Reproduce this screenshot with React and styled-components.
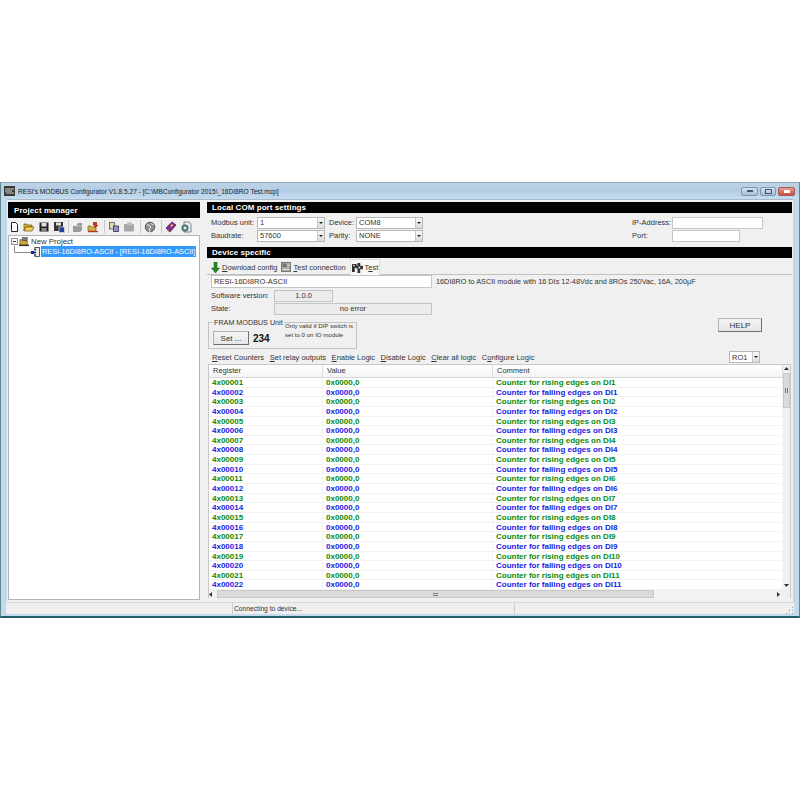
import React from "react";
import styled, { createGlobalStyle } from "styled-components";

const GlobalStyle = createGlobalStyle`
  html, body {
    margin: 0;
    padding: 0;
    background: #ffffff;
  }
  #root {
    width: 800px;
    height: 800px;
    font-family: "Liberation Sans", sans-serif;
    font-size: 7.5px;
    color: #333333;
  }
  * {
    box-sizing: border-box;
  }
  u {
    text-underline-offset: 1px;
  }
`;

const Window = styled.div`
  position: relative;
  top: 182px;
  width: 800px;
  height: 436px;
  display: flex;
  flex-direction: column;
  background: #c4d9ec;
  border: 1px solid #5f8790;
  border-bottom: 2px solid #1f5f70;
  border-top-color: #8fa9b5;
`;

const TitleBar = styled.div`
  height: 16px;
  flex: none;
  display: flex;
  align-items: center;
  padding: 0 4px 0 3px;
  gap: 3px;
  background: linear-gradient(#bdd2e6 0%, #b4cde4 45%, #c5dcf0 100%);
  font-size: 6.6px;
  color: #222222;
`;

const TitleText = styled.span`
  flex: 1;
  white-space: nowrap;
`;

const WinButtons = styled.div`
  display: flex;
  gap: 2px;
`;

const WinButton = styled.div`
  width: ${(p) => p.$w}px;
  height: 9px;
  border: 1px solid ${(p) => (p.$close ? "#a85a50" : "#7f97ad")};
  border-radius: 2px;
  background: ${(p) =>
    p.$close
      ? "linear-gradient(#e0a090, #c8503c)"
      : "linear-gradient(#d5e3f0, #a4bdd6)"};
  display: flex;
  align-items: center;
  justify-content: center;
`;

const WinGlyph = styled.div`
  width: ${(p) => p.$w}px;
  height: ${(p) => p.$h}px;
  border: 1px solid ${(p) => p.$c || "#44586c"};
  background: ${(p) => (p.$fill ? p.$fill : "transparent")};
`;

const Client = styled.div`
  flex: 1;
  min-height: 0;
  margin: 0 6px;
  display: flex;
  background: #f0f0f0;
  border-top: 1px solid #a9b9c8;
`;

const LeftPane = styled.div`
  width: 192px;
  flex: none;
  margin: 2px 0 2px 1px;
  display: flex;
  flex-direction: column;
`;

const Divider = styled.div`
  width: 7px;
  flex: none;
`;

const RightPane = styled.div`
  flex: 1;
  min-width: 0;
  display: flex;
  flex-direction: column;
  padding-top: 2px;
  margin-right: 1px;
`;

const PaneHeader = styled.div`
  height: ${(p) => p.$h}px;
  flex: none;
  background: #000000;
  color: #ffffff;
  font-weight: 700;
  font-size: 8px;
  letter-spacing: 0.07px;
  display: flex;
  align-items: center;
  padding-left: ${(p) => p.$pad}px;
`;

const Toolbar = styled.div`
  height: 17px;
  flex: none;
  display: flex;
  align-items: center;
  gap: 3px;
`;

const ToolSep = styled.div`
  width: 1px;
  height: 13px;
  background: #c8c8c8;
  margin-left: ${(p) => p.$ml || 0}px;
`;

const TreeBox = styled.div`
  flex: 1;
  background: #ffffff;
  border: 1px solid #b4b4b4;
  padding-left: 2px;
`;

const TreeRow = styled.div`
  display: flex;
  align-items: center;
  height: 10px;
  font-size: 7.8px;
  white-space: nowrap;
`;

const TreeChildRow = styled(TreeRow)`
  height: 11px;
  margin-left: 3px;
`;

const TreeLabel = styled.span`
  margin-left: 1px;
`;

const Expander = styled.div`
  width: 7px;
  height: 7px;
  border: 1px solid #8a8a8a;
  display: flex;
  align-items: center;
  justify-content: center;
  margin-right: 1px;
`;

const ExpanderDash = styled.div`
  width: 3px;
  height: 1px;
  background: #333333;
`;

const Selected = styled.span`
  background: #3399ff;
  color: #ffffff;
  height: 11px;
  line-height: 11px;
  padding: 0 1px;
  margin-left: 1px;
  font-size: 7.3px;
`;

const SettingsGrid = styled.div`
  display: grid;
  grid-template-columns: 46px 68px 31px 67px 209px 40px 91px;
  grid-template-rows: 13px 13px;
  padding: 3px 0 0 4px;
  height: 34px;
  flex: none;
  align-items: center;
`;

const FieldLabel = styled.span`
  white-space: nowrap;
  padding-left: ${(p) => p.$pad || 0}px;
`;

const Spacer = styled.span``;

const Combo = styled.div`
  height: 12px;
  width: ${(p) => (p.$w ? `${p.$w}px` : "100%")};
  background: #ffffff;
  border: 1px solid #b8b8b8;
  display: flex;
  align-items: center;
  justify-content: space-between;
  padding-left: 2px;
`;

const ComboArrow = styled.div`
  width: 7px;
  height: 100%;
  background: linear-gradient(#f6f6f6, #dcdcdc);
  border-left: 1px solid #c8c8c8;
  display: flex;
  align-items: center;
  justify-content: center;

  &::after {
    content: "";
    border-left: 2px solid transparent;
    border-right: 2px solid transparent;
    border-top: 2px solid #222222;
  }
`;

const TextInput = styled.div`
  height: ${(p) => p.$h || 12}px;
  width: ${(p) => p.$w}px;
  flex: none;
  background: #ffffff;
  border: 1px solid #c6c6c6;
  padding-left: 2px;
  line-height: ${(p) => (p.$h || 12) - 2}px;
`;

const Tabs = styled.div`
  height: 17px;
  flex: none;
  display: flex;
  align-items: flex-end;
  padding-left: 3px;
  border-bottom: 1px solid #c0c0c0;
`;

const Tab = styled.div`
  height: ${(p) => (p.$active ? 16 : 14)}px;
  margin-right: ${(p) => p.$gap}px;
  margin-bottom: ${(p) => (p.$active ? -1 : 0)}px;
  display: flex;
  align-items: center;
  gap: 2px;
  white-space: nowrap;
  padding: 0 1px;
  background: ${(p) => (p.$active ? "#f8f8f8" : "transparent")};
  border: ${(p) => (p.$active ? "1px solid #dddddd" : "none")};
  border-bottom: none;
`;

const NameRow = styled.div`
  display: flex;
  align-items: center;
  gap: 4px;
  height: 13px;
  flex: none;
  padding-left: 4px;
  white-space: nowrap;
`;

const Description = styled.span`
  font-size: 7.3px;
`;

const InfoRow = styled.div`
  display: flex;
  align-items: center;
  height: 13px;
  flex: none;
  margin-top: ${(p) => p.$top || 0}px;
  padding-left: 4px;
`;

const InfoLabel = styled.span`
  width: 63px;
  flex: none;
  white-space: nowrap;
`;

const ReadBox = styled.div`
  width: ${(p) => p.$w}px;
  height: 12px;
  background: #ececec;
  border: 1px solid #c4c4c4;
  text-align: center;
  line-height: 10px;
`;

const UnitRow = styled.div`
  display: flex;
  align-items: flex-start;
  justify-content: space-between;
  height: 35px;
  flex: none;
  padding: 3px 30px 0 1px;
`;

const FramGroup = styled.div`
  position: relative;
  width: 149px;
  height: 27px;
  margin-top: 4px;
  border: 1px solid #c2c2c2;
  display: flex;
  align-items: flex-end;
  padding: 0 0 3px 4px;
`;

const GroupLegend = styled.span`
  position: absolute;
  left: 4px;
  top: -5px;
  padding: 0 1px;
  background: #f0f0f0;
  font-size: 7.2px;
  white-space: nowrap;
`;

const PushButton = styled.div`
  width: ${(p) => p.$w}px;
  height: ${(p) => p.$h}px;
  flex: none;
  background: linear-gradient(#f4f4f4, #e6e6e6);
  border: 1px solid #b4b4b4;
  border-right-color: #707070;
  border-bottom-color: #707070;
  display: flex;
  align-items: center;
  justify-content: center;
  font-size: 8px;
`;

const UnitValue = styled.span`
  font-size: 10px;
  font-weight: 700;
  color: #111111;
  margin: 0 0 1px 4px;
  width: 32px;
`;

const Hint = styled.div`
  position: absolute;
  left: 76px;
  top: -2px;
  font-size: 6.1px;
  line-height: 9px;
  white-space: nowrap;
`;

const ActionRow = styled.div`
  height: 14px;
  flex: none;
  display: flex;
  align-items: center;
  padding: 0 32px 0 5px;
  white-space: nowrap;
`;

const ActionLink = styled.span`
  margin-right: 5.6px;
`;

const ActionFill = styled.div`
  flex: 1;
`;

const TableBox = styled.div`
  width: 583px;
  height: 234px;
  margin-left: 1px;
  flex: none;
  display: grid;
  grid-template-columns: 1fr 7px;
  grid-template-rows: 1fr 8px;
  background: #f0f0f0;
  border: 1px solid #c8c8c8;
  border-bottom: none;
`;

const TableArea = styled.div`
  overflow: hidden;
  background: #ffffff;
`;

const TableHead = styled.div`
  display: grid;
  grid-template-columns: 114px 170px 1fr;
  height: 13px;
  background: linear-gradient(#ffffff, #f4f4f4);
  border-bottom: 1px solid #d8d8d8;
`;

const HeadCell = styled.div`
  padding-left: 4px;
  line-height: 12px;
  border-right: 1px solid #dcdcdc;
`;

const TableRow = styled.div`
  display: grid;
  grid-template-columns: 114px 170px 1fr;
  height: 9.65px;
  border-bottom: 1px solid #f2f2f2;
  color: ${(p) => (p.$odd ? "#0b8a0b" : "#1a1ae6")};
  font-weight: 700;
  font-size: 8px;
  line-height: 9px;
  white-space: nowrap;
`;

const Cell = styled.div`
  padding-left: 3px;
  border-right: 1px solid #f2f2f2;
`;

const VScroll = styled.div`
  display: flex;
  flex-direction: column;
  align-items: stretch;
  background: #f2f2f2;
`;

const VThumb = styled.div`
  height: 35px;
  background: #dadada;
  border: 1px solid #c8c8c8;
  display: flex;
  align-items: center;
  justify-content: center;
`;

const VFill = styled.div`
  flex: 1;
`;

const HScroll = styled.div`
  display: flex;
  align-items: stretch;
  background: #f2f2f2;
`;

const HThumb = styled.div`
  width: 437px;
  background: #dadada;
  border: 1px solid #c8c8c8;
  display: flex;
  align-items: center;
  justify-content: center;
  margin-left: 3px;
`;

const Grip = styled.div`
  width: ${(p) => p.$w}px;
  height: ${(p) => p.$h}px;
  background: repeating-linear-gradient(
    ${(p) => (p.$w > p.$h ? "0deg" : "90deg")},
    #777777 0 1px,
    #dddddd 1px 2px
  );
`;

const ArrowBox = styled.div`
  flex: none;
  width: ${(p) => p.$w}px;
  height: ${(p) => p.$h}px;
  display: flex;
  align-items: center;
  justify-content: center;
`;

const ScrollCorner = styled.div`
  background: #f0f0f0;
`;

const StatusBar = styled.div`
  height: 12px;
  flex: none;
  margin: 0 5px;
  display: grid;
  grid-template-columns: 226px 282px 1fr 12px;
  background: #efefef;
  font-size: 6.7px;
  line-height: 11px;
  border-top: 1px solid #dadada;
`;

const StatusCell = styled.div`
  border-left: 1px solid #cfcfcf;
  padding-left: 1px;
`;

const SizeGrip = styled.div`
  display: flex;
  align-items: flex-end;
  justify-content: flex-end;
`;

const WindowFoot = styled.div`
  height: 2px;
  flex: none;
`;

const IconSvg = ({ children, size = 12, w, h }) => (
  <svg width={w || size} height={h || size} viewBox="0 0 12 12" style={{ flex: "none" }}>
    {children}
  </svg>
);

const IconNew = () => (
  <IconSvg>
    <path d="M3.5 1.5h4l2 2v7h-6z" fill="#fff" stroke="#222" />
  </IconSvg>
);
const IconOpen = () => (
  <IconSvg>
    <path d="M1 10V3h3l1 1h4v2H3l-2 4z" fill="#d8b030" stroke="#6a5310" strokeWidth=".7" />
    <path d="M1 10l2-4h8l-2 4z" fill="#f0d060" stroke="#6a5310" strokeWidth=".7" />
  </IconSvg>
);
const IconSave = () => (
  <IconSvg>
    <rect x="1.5" y="1.5" width="9" height="9" fill="#222" />
    <rect x="3.5" y="2" width="5" height="3.5" fill="#ddd" />
    <rect x="3.5" y="7" width="5" height="3.5" fill="#888" />
  </IconSvg>
);
const IconSaveAs = () => (
  <IconSvg>
    <rect x="1" y="1" width="9" height="9" fill="#333" />
    <rect x="3" y="1.5" width="5" height="3" fill="#ddd" />
    <rect x="6" y="6" width="5.5" height="5.5" fill="#2040a0" stroke="#eee" strokeWidth=".6" />
  </IconSvg>
);
const IconGray = () => (
  <IconSvg>
    <path d="M1 5h3l2-3h4v7l-2 2H1z" fill="#9a9a9a" />
    <path d="M4 5h6" stroke="#c0c0c0" />
  </IconSvg>
);
const IconFolderRed = () => (
  <IconSvg>
    <path d="M1 10V5h3l1 1h4v4z" fill="#d0b050" stroke="#6a5310" strokeWidth=".6" />
    <path d="M6 1h4v3h1.5L8.5 7 6 4z" fill="#c83020" />
    <rect x="1" y="10" width="10" height="1.2" fill="#c83020" />
  </IconSvg>
);
const IconCopy = () => (
  <IconSvg>
    <rect x="1.5" y="1.5" width="5" height="6.5" fill="#e6d9a8" stroke="#555" strokeWidth=".8" />
    <rect x="5.5" y="5" width="5" height="5.5" fill="#8a90d8" stroke="#334" strokeWidth=".8" />
  </IconSvg>
);
const IconPasteGray = () => (
  <IconSvg>
    <rect x="1" y="3" width="10" height="7.5" rx="1" fill="#a6a6a6" />
    <rect x="4" y="1.5" width="5" height="3" fill="#bcbcbc" />
  </IconSvg>
);
const IconGlobe = () => (
  <IconSvg>
    <circle cx="6" cy="6" r="4.8" fill="#8c8c8c" stroke="#444" strokeWidth=".8" />
    <path d="M3 3l4 3-2 2 1 3" stroke="#eee" fill="none" />
    <path d="M7 2.5l2.5 1.5" stroke="#eee" />
  </IconSvg>
);
const IconBook = () => (
  <IconSvg>
    <path d="M1 7l6-6 4 3-6 7z" fill="#8a2a9a" stroke="#3a1050" strokeWidth=".7" />
    <path d="M5 5l2-2 1.5 1-2 2z" fill="#f0c020" />
    <path d="M2 9l3 2.5" stroke="#d8b030" />
  </IconSvg>
);
const IconDocGear = () => (
  <IconSvg>
    <path d="M4 1h5l2 2v8H4z" fill="#e8eef0" stroke="#556" strokeWidth=".7" />
    <circle cx="5" cy="7" r="3.2" fill="#6d9a9a" stroke="#244" strokeWidth=".7" />
    <circle cx="5" cy="7" r="1.1" fill="#fff" />
  </IconSvg>
);
const IconProject = () => (
  <IconSvg w={11} h={11}>
    <path d="M1 10V4h3l1 1h4v5z" fill="#cfa838" stroke="#5a4510" strokeWidth=".7" />
    <rect x="4" y="1.5" width="5" height="3.5" fill="#6e7f90" stroke="#333" strokeWidth=".5" />
    <rect x="0" y="9.5" width="11" height="1.5" fill="#333" />
  </IconSvg>
);
const IconDevice = () => (
  <svg width="26" height="11" viewBox="0 0 26 11" style={{ flex: "none" }}>
    <path d="M.5 0v6.5H17" stroke="#8a8a8a" fill="none" />
    <rect x="17" y="5" width="3" height="3" fill="#1020c0" />
    <rect x="21" y="1.5" width="4.5" height="9" fill="#e4e8ea" stroke="#333" strokeWidth=".8" />
    <path d="M20 3.5h2M20 6.5h2M20 9h2" stroke="#333" />
  </svg>
);
const IconDownload = () => (
  <svg width="9" height="11" viewBox="0 0 9 11" style={{ flex: "none" }}>
    <path d="M3 0h3v6h2.5L4.5 11 .5 6H3z" fill="#1f8a1f" stroke="#0e5a0e" strokeWidth=".5" />
  </svg>
);
const IconConnection = () => (
  <svg width="10" height="10" viewBox="0 0 12 12" style={{ flex: "none" }}>
    <rect x=".5" y=".5" width="11" height="11" fill="#a8aca8" stroke="#666" />
    <rect x="2" y="2" width="5" height="4" fill="#707570" />
    <path d="M2 9h8M7 4h3" stroke="#e8e8e8" />
  </svg>
);
const IconTest = () => (
  <svg width="11" height="10" viewBox="0 0 12 11" style={{ flex: "none" }}>
    <path d="M0 1h5v4H3v5H0z" fill="#2a2a2a" />
    <path d="M6 0h3v3h3v4H9v4H6V6H4V3h2z" fill="#333" />
    <rect x="1" y="2" width="2" height="1.5" fill="#ddd" />
    <rect x="7" y="4" width="2" height="2" fill="#ddd" />
  </svg>
);
const IconApp = () => (
  <svg width="11" height="10" viewBox="0 0 11 10" style={{ flex: "none" }}>
    <rect width="11" height="10" fill="#3a3a3a" />
    <path d="M1 3h9M1 5h7M2 7h8" stroke="#cfcfcf" />
  </svg>
);
const IconGrip = () => (
  <svg width="8" height="8" viewBox="0 0 8 8">
    <path d="M7 1v1H6V1zM7 4v1H6V4zM4 4v1H3V4zM7 7v1H6V7zM4 7v1H3V7zM1 7v1H0V7z" fill="#9a9a9a" />
  </svg>
);
const Tri = ({ dir }) => {
  const d = {
    up: "M0 3L2.5 0 5 3z",
    down: "M0 0h5L2.5 3z",
    left: "M3 0v5L0 2.5z",
    right: "M0 0v5l3-2.5z",
  }[dir];
  return (
    <svg width="5" height="5" viewBox="0 0 5 5">
      <path d={d} fill="#333" />
    </svg>
  );
};

const rows = [];
for (let i = 1; i <= 22; i++) {
  const di = Math.ceil(i / 2);
  const odd = i % 2 === 1;
  rows.push({
    reg: "4x" + String(i).padStart(5, "0"),
    odd,
    comment: `Counter for ${odd ? "rising" : "falling"} edges on DI${di}`,
  });
}

const App = () => {
  return (
    <>
      <GlobalStyle />
      <Window>
        <TitleBar>
          <IconApp />
          <TitleText>RESI's MODBUS Configurator V1.8.5.27 - [C:\MBConfigurator 2015\_16DI8RO Test.mcp]</TitleText>
          <WinButtons>
            <WinButton $w={17}>
              <WinGlyph $w={6} $h={2} />
            </WinButton>
            <WinButton $w={16}>
              <WinGlyph $w={7} $h={5} />
            </WinButton>
            <WinButton $w={17} $close>
              <WinGlyph $w={6} $h={3} $c="#ffffff" $fill="#ffffff" />
            </WinButton>
          </WinButtons>
        </TitleBar>
        <Client>
          <LeftPane>
            <PaneHeader $h={16} $pad={6}>Project manager</PaneHeader>
            <Toolbar>
              <IconNew />
              <IconOpen />
              <IconSave />
              <IconSaveAs />
              <ToolSep />
              <IconGray />
              <IconFolderRed />
              <ToolSep $ml={2} />
              <IconCopy />
              <IconPasteGray />
              <ToolSep $ml={2} />
              <IconGlobe />
              <ToolSep $ml={2} />
              <IconBook />
              <IconDocGear />
            </Toolbar>
            <TreeBox>
              <TreeRow>
                <Expander>
                  <ExpanderDash />
                </Expander>
                <IconProject />
                <TreeLabel>New Project</TreeLabel>
              </TreeRow>
              <TreeChildRow>
                <IconDevice />
                <Selected>RESI-16DI8RO-ASCII - [RESI-16DI8RO-ASCII]</Selected>
              </TreeChildRow>
            </TreeBox>
          </LeftPane>
          <Divider />
          <RightPane>
            <PaneHeader $h={11} $pad={5}>Local COM port settings</PaneHeader>
            <SettingsGrid>
              <FieldLabel>Modbus unit:</FieldLabel>
              <Combo>
                1<ComboArrow />
              </Combo>
              <FieldLabel $pad={4}>Device:</FieldLabel>
              <Combo>
                COM8
                <ComboArrow />
              </Combo>
              <Spacer />
              <FieldLabel>IP-Address:</FieldLabel>
              <TextInput $w={91} />
              <FieldLabel>Baudrate:</FieldLabel>
              <Combo>
                57600
                <ComboArrow />
              </Combo>
              <FieldLabel $pad={4}>Parity:</FieldLabel>
              <Combo>
                NONE
                <ComboArrow />
              </Combo>
              <Spacer />
              <FieldLabel>Port:</FieldLabel>
              <TextInput $w={68} />
            </SettingsGrid>
            <PaneHeader $h={11} $pad={5}>Device specific</PaneHeader>
            <Tabs>
              <Tab $gap={2}>
                <IconDownload />
                <span><u>D</u>ownload config</span>
              </Tab>
              <Tab $gap={3}>
                <IconConnection />
                <span><u>T</u>est connection</span>
              </Tab>
              <Tab $active $gap={0}>
                <IconTest />
                <span>T<u>e</u>st</span>
              </Tab>
            </Tabs>
            <NameRow>
              <TextInput $w={221} $h={13}>RESI-16DI8RO-ASCII</TextInput>
              <Description>16DI8RO to ASCII module with 16 DIs 12-48Vdc and 8ROs 250Vac, 16A, 200µF</Description>
            </NameRow>
            <InfoRow $top={1}>
              <InfoLabel>Software version:</InfoLabel>
              <ReadBox $w={59}>1.0.0</ReadBox>
            </InfoRow>
            <InfoRow>
              <InfoLabel>State:</InfoLabel>
              <ReadBox $w={158}>no error</ReadBox>
            </InfoRow>
            <UnitRow>
              <FramGroup>
                <GroupLegend>FRAM MODBUS Unit</GroupLegend>
                <PushButton $w={36} $h={14}>Set ...</PushButton>
                <UnitValue>234</UnitValue>
                <Hint>
                  Only valid if DIP switch is
                  <br />
                  set to 0 on IO module
                </Hint>
              </FramGroup>
              <PushButton $w={44} $h={14}>HELP</PushButton>
            </UnitRow>
            <ActionRow>
              <ActionLink><u>R</u>eset Counters</ActionLink>
              <ActionLink><u>S</u>et relay outputs</ActionLink>
              <ActionLink><u>E</u>nable Logic</ActionLink>
              <ActionLink><u>D</u>isable Logic</ActionLink>
              <ActionLink><u>C</u>lear all logic</ActionLink>
              <ActionLink>C<u>o</u>nfigure Logic</ActionLink>
              <ActionFill />
              <Combo $w={31}>
                RO1
                <ComboArrow />
              </Combo>
            </ActionRow>
            <TableBox>
              <TableArea>
                <TableHead>
                  <HeadCell>Register</HeadCell>
                  <HeadCell>Value</HeadCell>
                  <HeadCell>Comment</HeadCell>
                </TableHead>
                {rows.map((r) => (
                  <TableRow key={r.reg} $odd={r.odd}>
                    <Cell>{r.reg}</Cell>
                    <Cell>0x0000,0</Cell>
                    <Cell>{r.comment}</Cell>
                  </TableRow>
                ))}
              </TableArea>
              <VScroll>
                <ArrowBox $w={7} $h={8}>
                  <Tri dir="up" />
                </ArrowBox>
                <VThumb>
                  <Grip $w={4} $h={5} />
                </VThumb>
                <VFill />
                <ArrowBox $w={7} $h={8}>
                  <Tri dir="down" />
                </ArrowBox>
              </VScroll>
              <HScroll>
                <ArrowBox $w={5} $h={8}>
                  <Tri dir="left" />
                </ArrowBox>
                <HThumb>
                  <Grip $w={5} $h={4} />
                </HThumb>
                <VFill />
                <ArrowBox $w={8} $h={8}>
                  <Tri dir="right" />
                </ArrowBox>
              </HScroll>
              <ScrollCorner />
            </TableBox>
          </RightPane>
        </Client>
        <StatusBar>
          <div />
          <StatusCell>Connecting to device...</StatusCell>
          <StatusCell />
          <SizeGrip>
            <IconGrip />
          </SizeGrip>
        </StatusBar>
        <WindowFoot />
      </Window>
    </>
  );
};

export default App;
